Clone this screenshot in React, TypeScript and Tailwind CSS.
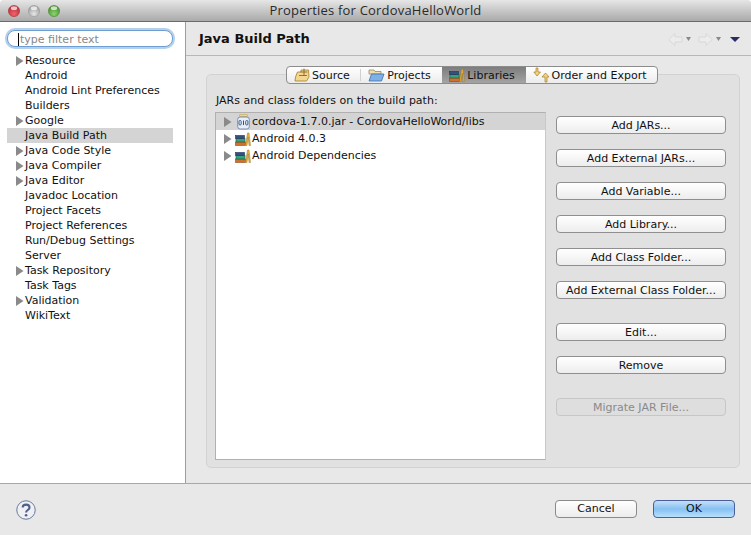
import React from "react";

const tree: [string, boolean][] = [
  ["Resource", true], ["Android", false], ["Android Lint Preferences", false], ["Builders", false],
  ["Google", true], ["Java Build Path", false], ["Java Code Style", true], ["Java Compiler", true],
  ["Java Editor", true], ["Javadoc Location", false], ["Project Facets", false], ["Project References", false],
  ["Run/Debug Settings", false], ["Server", false], ["Task Repository", true], ["Task Tags", false],
  ["Validation", true], ["WikiText", false],
];

function Arrow() {
  return (
    <svg width="8" height="10" viewBox="0 0 8 10" className="shrink-0">
      <path d="M0 0 L7.5 5 L0 10 Z" fill="#8a8a8a" />
    </svg>
  );
}

function Light({ c, e }: { c: string; e: string }) {
  return (
    <svg width="12" height="12" viewBox="0 0 12 12">
      <defs>
        <radialGradient id={"g" + c.slice(1)} cx="50%" cy="75%" r="70%">
          <stop offset="0%" stopColor={c} />
          <stop offset="100%" stopColor={e} />
        </radialGradient>
      </defs>
      <circle cx="6" cy="6" r="5.6" fill={"url(#g" + c.slice(1) + ")"} stroke={e} strokeWidth="0.6" />
      <ellipse cx="6" cy="3.2" rx="3.2" ry="1.9" fill="#fff" opacity="0.7" />
    </svg>
  );
}

function Books({ size = 16 }: { size?: number }) {
  return (
    <svg width={size} height={size} viewBox="0 0 16 16" className="shrink-0">
      <rect x="0.5" y="11" width="10" height="3.5" fill="#d0702c" stroke="#8a4a1c" strokeWidth="0.6" />
      <rect x="1" y="7.5" width="9" height="3.5" fill="#35a37e" stroke="#1d5c48" strokeWidth="0.6" />
      <rect x="0.5" y="4.5" width="9" height="3" fill="#33507f" stroke="#1f3358" strokeWidth="0.6" />
      <path d="M10.5 14.5 L12.5 2 L14 2 L15.5 14.5 L14 14.5 L13.2 6 L12 14.5 Z" fill="#e8b53c" stroke="#9a7420" strokeWidth="0.5" />
    </svg>
  );
}

function Jar() {
  return (
    <svg width="13" height="16" viewBox="0 0 13 16" className="shrink-0">
      <rect x="2.5" y="0.5" width="8" height="2" rx="0.5" fill="#f0d890" stroke="#c8aa50" strokeWidth="0.6" />
      <rect x="0.7" y="3" width="11.6" height="12" rx="2.5" fill="#e6eef8" stroke="#6f86ad" strokeWidth="0.9" />
      <rect x="2" y="6.5" width="2.2" height="4.5" rx="1" fill="none" stroke="#34507f" strokeWidth="0.9" />
      <path d="M6.5 6.5 V11" stroke="#34507f" strokeWidth="1" />
      <rect x="8.7" y="6.5" width="2.2" height="4.5" rx="1" fill="none" stroke="#34507f" strokeWidth="0.9" />
    </svg>
  );
}

function ListRow({ icon, text, selected }: { icon: React.ReactNode; text: string; selected?: boolean }) {
  return (
    <div className={"h-[17px] flex items-center pl-[8px] " + (selected ? "bg-[#d4d4d4]" : "")}>
      <Arrow />
      <span className="w-[3px] shrink-0" />
      <span className="w-[16px] shrink-0 flex justify-center">{icon}</span>
      <span className="ml-[1px] text-[#111] whitespace-pre">{text}</span>
    </div>
  );
}

function Btn({ label, disabled, className = "" }: { label: string; disabled?: boolean; className?: string }) {
  return (
    <div
      className={
        "h-[18px] w-[170px] rounded-[4px] border flex items-center justify-center " +
        (disabled
          ? "border-[#c6c6c6] bg-[#dedede] text-[#8a8a8a] "
          : "border-[#8f8f8f] bg-gradient-to-b from-[#ffffff] to-[#ededed] text-[#111] ") +
        className
      }
    >
      {label}
    </div>
  );
}

function Tab({ icon, label, active, divider, w }: { icon: React.ReactNode; label: string; active?: boolean; divider?: boolean; w: string }) {
  return (
    <div
      className={
        "h-full flex items-center justify-center gap-[2px] pr-[4px] " + w + " " +
        (active ? "bg-gradient-to-b from-[#7d7d7d] to-[#a4a4a4] text-[#111]" : "") +
        (divider ? " relative after:absolute after:right-0 after:top-[2px] after:bottom-[2px] after:w-px after:bg-[#d0d0d0]" : "")
      }
    >
      {icon}
      <span>{label}</span>
    </div>
  );
}

function SourceIcon() {
  return (
    <svg width="16" height="14" viewBox="0 0 16 14" className="shrink-0">
      <path d="M3.5 4 H7 V2 H14.5 L15 9 L12.5 13 H1 L1.5 9 Z" fill="#f3d68f" stroke="#a27c32" strokeWidth="0.8" />
      <path d="M10 0.5 V7.5 M6.5 4 H13.5 M5 7.5 H13" stroke="#7a5a20" strokeWidth="0.8" />
    </svg>
  );
}
function ProjectsIcon() {
  return (
    <svg width="17" height="14" viewBox="0 0 17 14" className="shrink-0">
      <path d="M1 2 H6 L7 3.5 H13 V6 H1 Z" fill="#f0e0b0" stroke="#8a7a50" strokeWidth="0.7" />
      <path d="M1 13 L3.5 6 H16 L13.5 13 Z" fill="#7fb0e6" stroke="#3f6ea8" strokeWidth="0.8" />
    </svg>
  );
}
function OrderIcon() {
  return (
    <svg width="17" height="16" viewBox="0 0 17 16" className="shrink-0">
      <path d="M5 1 V5 H7.5 L4 9 L0.8 5 H3 V1 Z" fill="#f2d27a" stroke="#a4802c" strokeWidth="0.7" />
      <path d="M12 15 V10 H9 L12.5 6 L16 10 H14 V15 Z" fill="#f2d27a" stroke="#a4802c" strokeWidth="0.7" />
    </svg>
  );
}
function NavArrow({ dir }: { dir: "l" | "r" }) {
  return (
    <svg width="15" height="13" viewBox="0 0 15 13" className="shrink-0">
      <path
        d={dir === "l" ? "M7 0.5 L0.7 6.5 L7 12.5 V9 H14 V4 H7 Z" : "M8 0.5 L14.3 6.5 L8 12.5 V9 H1 V4 H8 Z"}
        fill="#ececec"
        stroke="#d8d8d8"
      />
    </svg>
  );
}
function Tri({ c, w = 5, h = 4 }: { c: string; w?: number; h?: number }) {
  return (
    <svg width={w} height={h} viewBox={"0 0 " + w + " " + h} className="shrink-0">
      <path d={"M0 0 H" + w + " L" + w / 2 + " " + h + " Z"} fill={c} />
    </svg>
  );
}

export default function App() {
  return (
    <div className="w-[751px] h-[535px] flex flex-col bg-[#e8e8e8] overflow-hidden text-[11px] leading-[15px] text-[#111] font-['DejaVu_Sans',sans-serif] rounded-t-[4px]">
      <div className="h-[22px] shrink-0 flex items-center relative bg-gradient-to-b from-[#e6e6e6] to-[#aaaaaa] border-b border-[#6b6b6b]">
        <div className="flex gap-[8px] pl-[8px] items-center">
          <Light c="#f8606a" e="#b03038" />
          <Light c="#e6e6e6" e="#9a9a9a" />
          <Light c="#86d868" e="#4a8a30" />
        </div>
        <div className="absolute inset-0 flex items-center justify-center text-[13px] tracking-[0.2px] text-[#2a2a2a] font-['Open_Sans',sans-serif]">
          Properties for CordovaHelloWorld
        </div>
      </div>

      <div className="flex-1 flex min-h-0 border-b border-[#a8a8a8]">
        <div className="w-[186px] shrink-0 bg-white border-r border-[#9e9e9e] pt-[8px]">
          <div className="mx-[7px] h-[17px] w-[166px] rounded-[8px] border border-[#6f9fd0] ring-2 ring-[#b4d0ec] bg-white flex items-center pl-[10px] pt-[1px] text-[#888]">
            <span className="w-px h-[13px] bg-black mr-[1px]" />
            type filter text
          </div>
          <div className="mt-[6px] flex flex-col">
            {tree.map(([t, hasArrow]) => (
              <div
                key={t}
                className={"h-[15px] mx-[7px] w-[166px] flex items-center whitespace-pre " + (t === "Java Build Path" ? "bg-[#d4d4d4]" : "")}
              >
                <span className="w-[9px] ml-[9px] shrink-0 flex items-center">{hasArrow && <Arrow />}</span>
                {t}
              </div>
            ))}
          </div>
        </div>

        <div className="flex-1 flex flex-col min-w-0">
          <div className="h-[34px] shrink-0 flex items-center justify-between pl-[13px] pr-[11px] border-b border-[#b8b8b8]">
            <span className="font-bold text-[13px]">Java Build Path</span>
            <div className="flex items-center mt-[1px]">
              <NavArrow dir="l" />
              <span className="w-[3px]" />
              <Tri c="#888" />
              <span className="w-[7px]" />
              <NavArrow dir="r" />
              <span className="w-[3px]" />
              <Tri c="#888" />
              <span className="w-[9px]" />
              <Tri c="#2b2b66" w={10} h={5} />
            </div>
          </div>

          <div className="flex-1 min-h-0 pt-[18px] pl-[20px] pr-[11px] pb-[15px]">
            <div className="h-full rounded-[5px] border border-[#d2d2d2] bg-[#e1e1e1] flex flex-col">
              <div className="flex justify-center -mt-[9px] h-[18px] shrink-0 pr-[2px]">
                <div className="flex h-full rounded-[4px] border border-[#8c8c8c] bg-gradient-to-b from-[#ffffff] to-[#ececec] overflow-hidden">
                  <Tab w="w-[74px]" icon={<SourceIcon />} label="Source" divider />
                  <Tab w="w-[81px]" icon={<ProjectsIcon />} label="Projects" />
                  <Tab w="w-[84px]" icon={<Books />} label="Libraries" active />
                  <Tab w="w-[131px]" icon={<OrderIcon />} label="Order and Export" />
                </div>
              </div>
              <div className="pl-[9px] pt-[9px] h-[28px] shrink-0 whitespace-pre">JARs and class folders on the build path:</div>
              <div className="flex-1 min-h-0 flex pl-[8px] pb-[7px]">
                <div className="w-[331px] shrink-0 bg-white border border-[#b0b0b0] border-r-[#c8c8c8]">
                  <ListRow icon={<Jar />} text="cordova-1.7.0.jar - CordovaHelloWorld/libs" selected />
                  <ListRow icon={<Books />} text="Android 4.0.3" />
                  <ListRow icon={<Books />} text="Android Dependencies" />
                </div>
                <div className="ml-[10px] pt-[4px] flex flex-col">
                  <Btn label="Add JARs..." />
                  <Btn label="Add External JARs..." className="mt-[15px]" />
                  <Btn label="Add Variable..." className="mt-[15px]" />
                  <Btn label="Add Library..." className="mt-[15px]" />
                  <Btn label="Add Class Folder..." className="mt-[15px]" />
                  <Btn label="Add External Class Folder..." className="mt-[15px]" />
                  <Btn label="Edit..." className="mt-[24px]" />
                  <Btn label="Remove" className="mt-[15px]" />
                  <Btn label="Migrate JAR File..." disabled className="mt-[24px]" />
                </div>
              </div>
            </div>
          </div>
        </div>
      </div>

      <div className="h-[51px] shrink-0 flex items-center justify-between pl-[16px] pr-[16px]">
        <svg width="20" height="20" viewBox="0 0 21 21" className="shrink-0">
          <circle cx="10.5" cy="10.5" r="9.7" fill="#f0f0f4" stroke="#5f7396" strokeWidth="1" />
          <path d="M7 8 C7 3.8 14.2 3.8 14.2 8 C14.2 10.6 10.6 10.4 10.6 13" fill="none" stroke="#4d6288" strokeWidth="2.2" />
          <circle cx="10.6" cy="16" r="1.4" fill="#4d6288" />
        </svg>
        <div className="flex gap-[16px] mb-[2px]">
          <div className="w-[82px] h-[18px] rounded-[4px] border border-[#8a8a8a] bg-gradient-to-b from-[#ffffff] to-[#ececec] flex items-center justify-center">Cancel</div>
          <div className="w-[82px] h-[18px] rounded-[4px] border border-[#4a5f9c] bg-gradient-to-b from-[#c4e0fa] via-[#86c0f2] to-[#b8e0fc] flex items-center justify-center">OK</div>
        </div>
      </div>
    </div>
  );
}
